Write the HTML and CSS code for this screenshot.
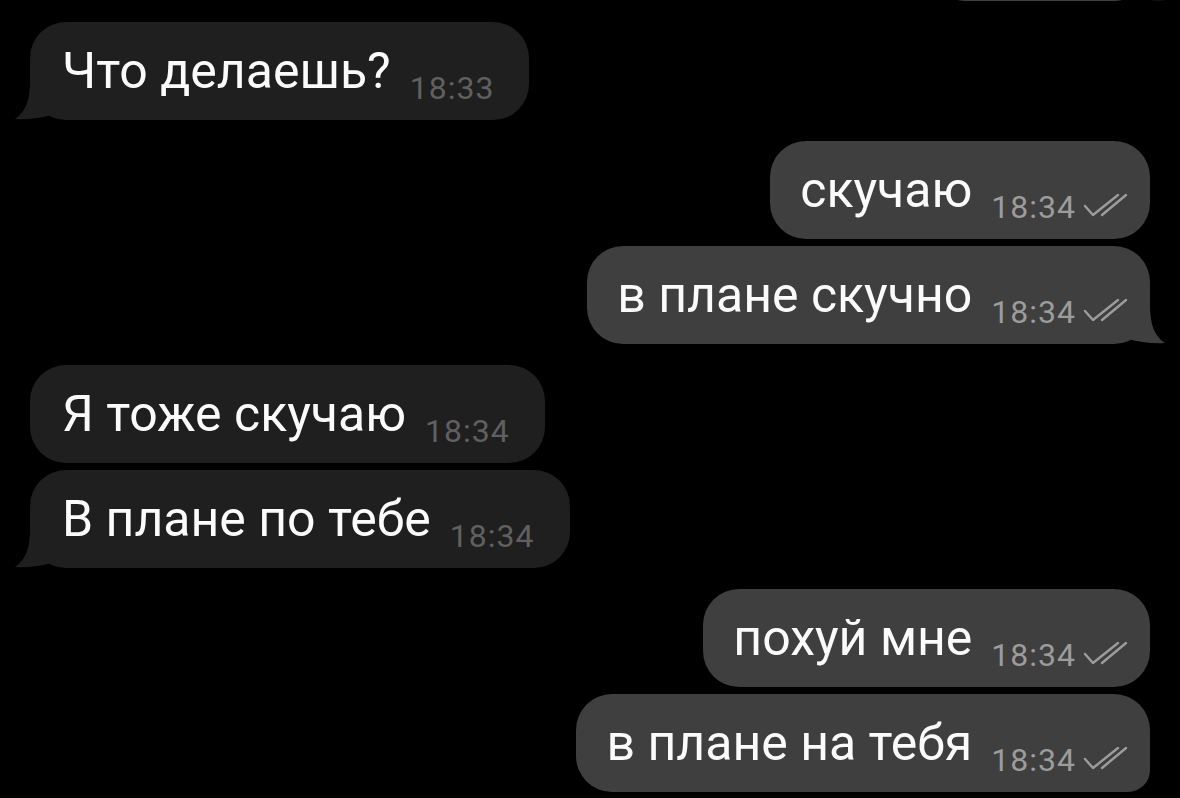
FILE: index.html
```html
<!DOCTYPE html>
<html>
<head>
<meta http-equiv="Content-Type" content="text/html; charset=utf-8">
<title>Чат</title>
<link rel="stylesheet" href="styles.css">
</head>

<body>

<main class="chat">
  <!-- previous message, scrolled mostly out of view -->
  <div class="msg msg--out msg--cut">
    <div class="bubble bubble--cut">
      <svg class="tail" viewBox="0 0 40 40"><path d="M15 0C15 22 10 32 0 39C12 40 26 38 37 35L37 0Z"/></svg>
    </div>
  </div>

  <div class="msg msg--in msg--group">
    <div class="bubble">
      <span class="bubble__text">Что делаешь?</span>
      <span class="bubble__meta"><span class="bubble__time">18:33</span></span>
      <svg class="tail" viewBox="0 0 40 40"><path d="M15 0C15 22 10 32 0 39C12 40 26 38 37 35L37 0Z"/></svg>
    </div>
  </div>

  <div class="msg msg--out msg--group">
    <div class="bubble">
      <span class="bubble__text">скучаю</span>
      <span class="bubble__meta">
        <span class="bubble__time">18:34</span>
        <svg class="check" viewBox="0 0 45 24"><path d="M2 13L10 22L35 2M19 22L43 2"/></svg>
      </span>
    </div>
  </div>
  <div class="msg msg--out">
    <div class="bubble">
      <span class="bubble__text">в плане скучно</span>
      <span class="bubble__meta">
        <span class="bubble__time">18:34</span>
        <svg class="check" viewBox="0 0 45 24"><path d="M2 13L10 22L35 2M19 22L43 2"/></svg>
      </span>
      <svg class="tail" viewBox="0 0 40 40"><path d="M15 0C15 22 10 32 0 39C12 40 26 38 37 35L37 0Z"/></svg>
    </div>
  </div>

  <div class="msg msg--in msg--group">
    <div class="bubble">
      <span class="bubble__text">Я тоже скучаю</span>
      <span class="bubble__meta"><span class="bubble__time">18:34</span></span>
    </div>
  </div>
  <div class="msg msg--in">
    <div class="bubble">
      <span class="bubble__text">В плане по тебе</span>
      <span class="bubble__meta"><span class="bubble__time">18:34</span></span>
      <svg class="tail" viewBox="0 0 40 40"><path d="M15 0C15 22 10 32 0 39C12 40 26 38 37 35L37 0Z"/></svg>
    </div>
  </div>

  <div class="msg msg--out msg--group">
    <div class="bubble">
      <span class="bubble__text">похуй мне</span>
      <span class="bubble__meta">
        <span class="bubble__time">18:34</span>
        <svg class="check" viewBox="0 0 45 24"><path d="M2 13L10 22L35 2M19 22L43 2"/></svg>
      </span>
    </div>
  </div>
  <div class="msg msg--out">
    <div class="bubble bubble--last">
      <span class="bubble__text">в плане на тебя</span>
      <span class="bubble__meta">
        <span class="bubble__time">18:34</span>
        <svg class="check" viewBox="0 0 45 24"><path d="M2 13L10 22L35 2M19 22L43 2"/></svg>
      </span>
    </div>
  </div>
</main>

</body>

</html>
```

FILE: styles.css
```css
/* reset */
html,body,main,div,span{margin:0;padding:0}

/* page */
html,body{background:#000;font-family:Roboto,"Noto Sans",sans-serif;-webkit-text-size-adjust:100%;}
body{inline-size:100vw;block-size:100vh;overflow:hidden;}

.chat{
  --in-bg: #1f1f1f;
  --out-bg: #3f3f3f;
  --in-time: #606060;
  --out-time: #9c9c9c;

  display:flex;flex-direction:column;padding:0 30px;box-sizing:border-box;
}

.msg{display:flex;margin-block-start:7px;}
.msg--group{margin-block-start:21px;}
.msg--cut{margin-block-start:-97px;}
.msg--in{justify-content:flex-start;}
.msg--out{justify-content:flex-end;}

.bubble{position:relative;display:flex;align-items:flex-end;block-size:98px;box-sizing:border-box;padding-block-end:16px;border-radius:36px;color:#fbfbfb;white-space:nowrap;}
.msg--in .bubble{background-color:var(--in-bg);padding-inline:32px 35px;}
.msg--out .bubble{background-color:var(--out-bg);padding-inline:30px 22px;}
.bubble--last{border-end-end-radius:22px;}
.bubble--cut{inline-size:220px;}

.bubble__text{font-size:50px;line-height:50px;margin-block-end:8px;}
.bubble__meta{display:flex;align-items:flex-end;gap:7px;margin-inline-start:19px;}
.bubble__time{font-size:32px;line-height:32px;letter-spacing:1px;}
.msg--in .bubble__time{color:var(--in-time);}
.msg--out .bubble__time{color:var(--out-time);}

.check{inline-size:45px;block-size:24px;margin-block-end:6px;flex-shrink:0;}
.check path{fill:none;stroke:var(--out-time);stroke-width:2.4;stroke-linecap:round;stroke-linejoin:round;}

/* bubble tail */
.tail{position:absolute;bottom:0;inline-size:40px;block-size:40px;}
.msg--in .tail{left:-15px;}
.msg--in .tail path{fill:var(--in-bg);}
.msg--out .tail{right:-15px;transform:scaleX(-1);}
.msg--out .tail path{fill:var(--out-bg);}
```
